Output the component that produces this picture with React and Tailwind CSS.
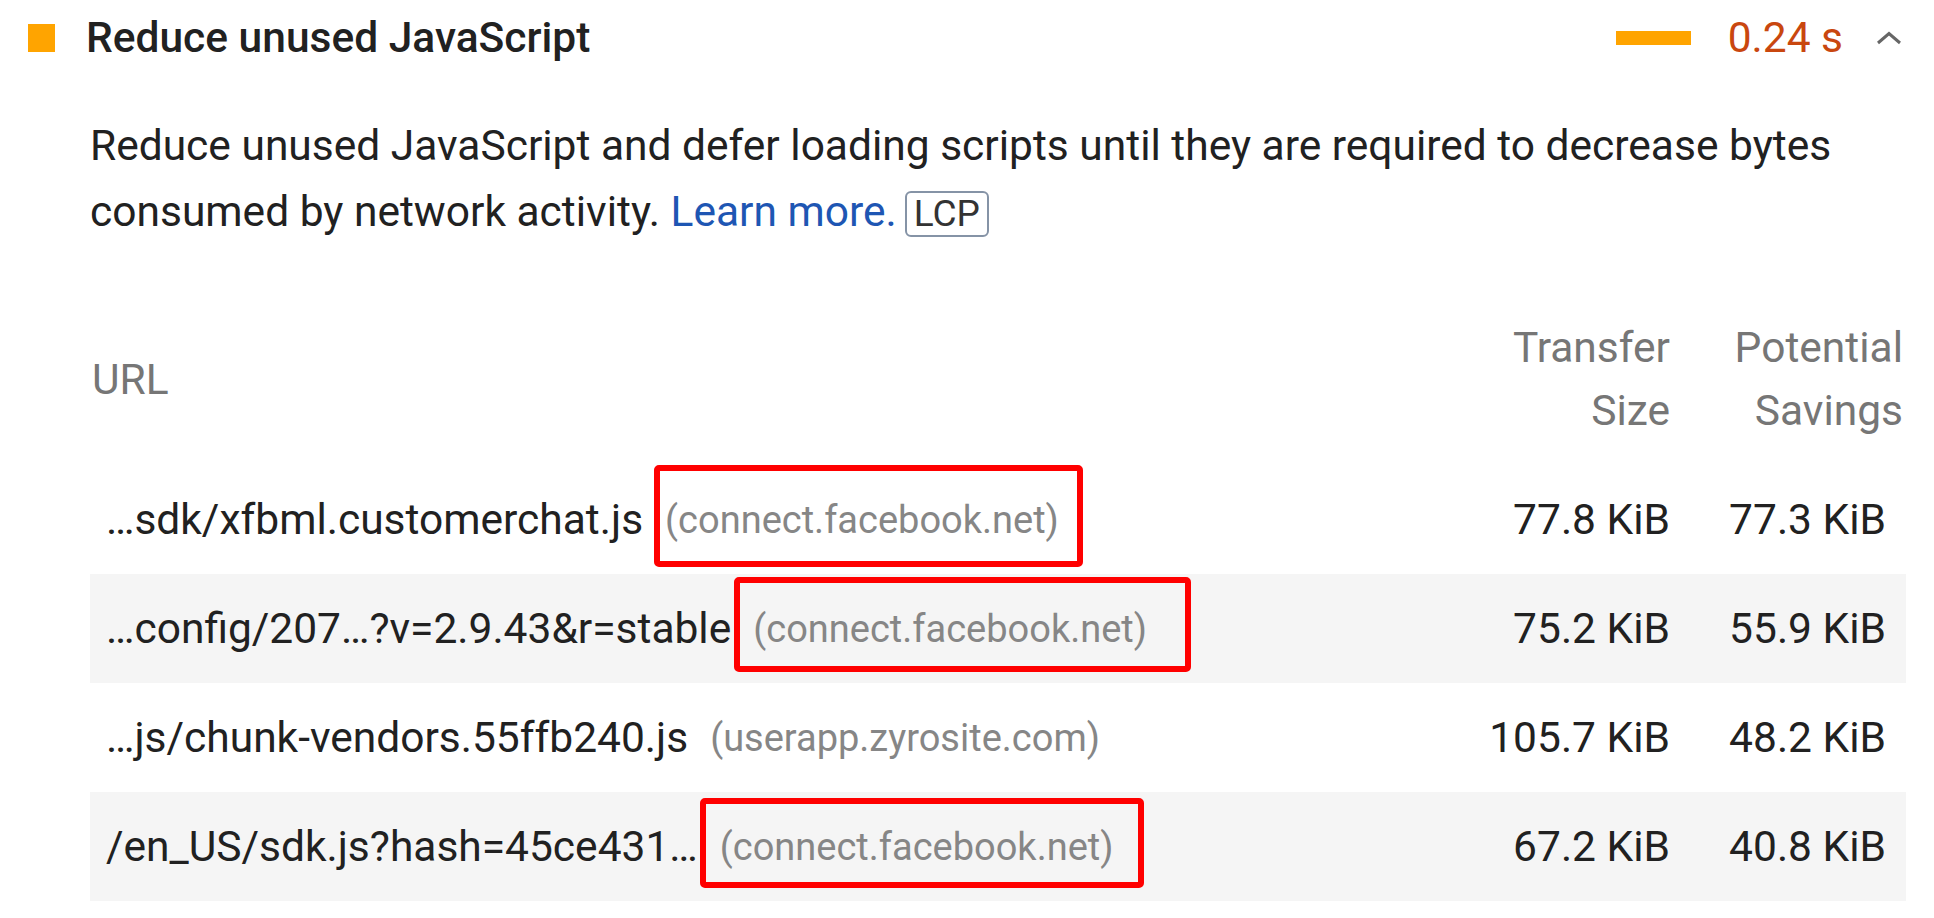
import React from "react";

const rows = [
  {
    url: "…sdk/xfbml.customerchat.js",
    host: "(connect.facebook.net)",
    size: "77.8 KiB",
    savings: "77.3 KiB",
    shaded: false,
    box: { top: -33, height: 102, left: -11, right: -24 },
  },
  {
    url: "…config/207…?v=2.9.43&r=stable",
    host: "(connect.facebook.net)",
    size: "75.2 KiB",
    savings: "55.9 KiB",
    shaded: true,
    box: { top: -30, height: 95, left: -19, right: -44 },
  },
  {
    url: "…js/chunk-vendors.55ffb240.js",
    host: "(userapp.zyrosite.com)",
    size: "105.7 KiB",
    savings: "48.2 KiB",
    shaded: false,
    box: null,
  },
  {
    url: "/en_US/sdk.js?hash=45ce431…",
    host: "(connect.facebook.net)",
    size: "67.2 KiB",
    savings: "40.8 KiB",
    shaded: true,
    box: { top: -27, height: 90, left: -20, right: -31 },
  },
];

export default function App() {
  return (
    <div className="w-[1934px] h-[918px] overflow-hidden bg-white text-[#212121] font-['Roboto','Liberation_Sans',sans-serif]">
      {/* Audit header */}
      <div className="flex items-center h-[76px] pl-[28px] pr-[32px]">
        <div className="w-[27px] h-[28px] bg-[#ffa400]" />
        <div className="ml-[31px] text-[42.5px] leading-[50px] font-medium text-[#212121]">
          Reduce unused JavaScript
        </div>
        <div className="flex-1" />
        <div className="w-[75px] h-[14px] bg-[#ffa400]" />
        <div className="ml-[37px] text-[42.5px] leading-[50px] text-[#c9470f]">0.24 s</div>
        <svg className="ml-[33px]" width="26" height="14" viewBox="0 0 26 14">
          <polyline
            points="2,12 13,2.5 24,12"
            fill="none"
            stroke="#666666"
            strokeWidth="3"
          />
        </svg>
      </div>

      {/* Description */}
      <div className="mt-[37px] ml-[90px] w-[1800px] text-[42.5px] leading-[66px] text-[#212121]">
        Reduce unused JavaScript and defer loading scripts until they are required to decrease bytes consumed by network activity.{" "}
        <span className="text-[#1e56b3]">Learn more.</span>
        <span className="ml-[8px] inline-block border-2 border-[#8593a6] rounded-[6px] px-[7px] text-[37px] leading-[42px] text-[#333333]">
          LCP
        </span>
      </div>

      {/* Table */}
      <div className="ml-[90px] w-[1816px]">
        <div className="mt-[71px] mb-[23px] flex items-center h-[126px] text-[42.5px] leading-[63px] text-[#767676]">
          <div className="flex-1 pl-[2px]">URL</div>
          <div className="w-[240px] text-right">
            <div>Transfer</div>
            <div>Size</div>
          </div>
          <div className="w-[236px] text-right pr-[3px]">
            <div>Potential</div>
            <div>Savings</div>
          </div>
        </div>

        {rows.map((r, i) => (
          <div
            key={i}
            className={`flex items-center h-[109px] text-[42.5px] ${r.shaded ? "bg-[#f5f5f5]" : "bg-white"}`}
          >
            <div className="flex-1 flex items-center pl-[16px] whitespace-nowrap">
              <span className="leading-[50px] text-[#212121]">{r.url}</span>
              <span className="relative ml-[22px] text-[38px] leading-[44px] text-[#868686]">
                {r.host}
                {r.box && (
                  <span
                    className="absolute border-[6px] border-[#ff0000] rounded-[5px]"
                    style={{
                      top: r.box.top,
                      height: r.box.height,
                      left: r.box.left,
                      right: r.box.right,
                    }}
                  />
                )}
              </span>
            </div>
            <div className="w-[240px] text-right leading-[50px]">{r.size}</div>
            <div className="w-[236px] text-right pr-[20px] leading-[50px]">{r.savings}</div>
          </div>
        ))}
      </div>
    </div>
  );
}
